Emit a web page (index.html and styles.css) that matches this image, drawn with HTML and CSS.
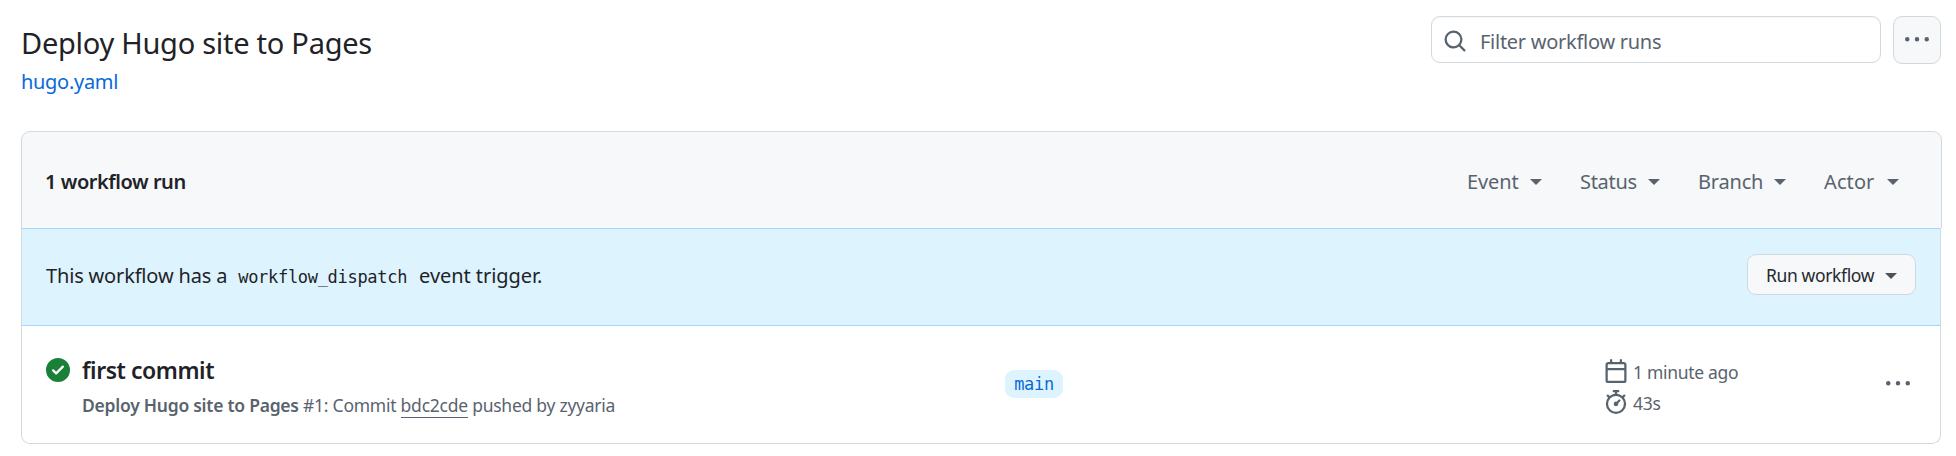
FILE: index.html
```html
<!DOCTYPE html>
<html lang="en">
<head>
<meta charset="utf-8">
<title>Workflow runs</title>
<link rel="stylesheet" href="styles.css">
</head>
<body>
<header class="page-head">
  <div class="heading">
    <h1 class="title">Deploy Hugo site to Pages</h1>
    <a class="file-link">hugo.yaml</a>
  </div>
  <div class="tools">
    <div class="search">
      <svg class="icon" viewBox="0 0 16 16"><path d="M10.68 11.74a6 6 0 0 1-7.922-8.982 6 6 0 0 1 8.982 7.922l3.04 3.04a.749.749 0 0 1-.326 1.275.749.749 0 0 1-.734-.215ZM11.5 7a4.499 4.499 0 1 0-8.997 0A4.499 4.499 0 0 0 11.5 7Z"/></svg>
      <span class="placeholder">Filter workflow runs</span>
    </div>
    <div class="more-button">
      <svg class="icon" viewBox="0 0 16 16"><path d="M8 9a1.5 1.5 0 1 0 0-3 1.5 1.5 0 0 0 0 3ZM1.5 9a1.5 1.5 0 1 0 0-3 1.5 1.5 0 0 0 0 3Zm13 0a1.5 1.5 0 1 0 0-3 1.5 1.5 0 0 0 0 3Z"/></svg>
    </div>
  </div>
</header>
<main class="runs">
  <div class="runs-head">
    <strong class="count">1 workflow run</strong>
    <nav class="filters">
      <span class="filter"><span class="f-event">Event</span><i class="caret"></i></span>
      <span class="filter"><span class="f-status">Status</span><i class="caret"></i></span>
      <span class="filter"><span class="f-branch">Branch</span><i class="caret"></i></span>
      <span class="filter"><span class="f-actor">Actor</span><i class="caret"></i></span>
    </nav>
  </div>
  <div class="dispatch">
    <p class="dispatch-text"><span>This workflow has a</span><code class="code">workflow_dispatch</code><span class="trigger">event trigger.</span></p>
    <div class="run-button"><span class="run-label">Run workflow</span><i class="caret caret-large"></i></div>
  </div>
  <div class="run">
    <svg class="icon check" viewBox="0 0 16 16"><path d="M8 16A8 8 0 1 1 8 0a8 8 0 0 1 0 16Zm3.78-9.72a.751.751 0 0 0-.018-1.042.751.751 0 0 0-1.042-.018L6.75 9.19 5.28 7.72a.751.751 0 0 0-1.042.018.751.751 0 0 0-.018 1.042l2 2a.75.75 0 0 0 1.06 0Z"/></svg>
    <div class="run-info">
      <div class="run-title">first commit</div>
      <div class="run-meta"><b>Deploy Hugo site to Pages</b> #1: Commit <span class="sha">bdc2cde</span> pushed by zyyaria</div>
    </div>
    <div class="branch-cell"><span class="branch">main</span></div>
    <div class="times">
      <div class="time"><svg class="icon" viewBox="0 0 16 16"><path d="M4.75 0a.75.75 0 0 1 .75.75V2h5V.75a.75.75 0 0 1 1.5 0V2h1.25c.966 0 1.75.784 1.75 1.75v10.5A1.75 1.75 0 0 1 13.25 16H2.75A1.75 1.75 0 0 1 1 14.25V3.75C1 2.784 1.784 2 2.75 2H4V.75A.75.75 0 0 1 4.75 0ZM2.5 7.5v6.75c0 .138.112.25.25.25h10.5a.25.25 0 0 0 .25-.25V7.5Zm10.75-4H2.75a.25.25 0 0 0-.25.25V6h11V3.75a.25.25 0 0 0-.25-.25Z"/></svg><span class="ago">1 minute ago</span></div>
      <div class="time"><svg class="icon" viewBox="0 0 16 16"><path d="M5.75.75A.75.75 0 0 1 6.5 0h3a.75.75 0 0 1 0 1.5h-.75v1l-.001.041a6.724 6.724 0 0 1 3.464 1.435l.007-.006.75-.75a.749.749 0 0 1 1.275.326.749.749 0 0 1-.215.734l-.75.75-.006.007a6.75 6.75 0 1 1-10.548 0L2.72 5.03l-.75-.75a.751.751 0 0 1 .018-1.042.751.751 0 0 1 1.042-.018l.75.75.007.006A6.72 6.72 0 0 1 7.25 2.541V1.5H6.5a.75.75 0 0 1-.75-.75ZM8 14.5a5.25 5.25 0 1 0-.001-10.501A5.25 5.25 0 0 0 8 14.5Zm.389-6.7 1.33-1.33a.75.75 0 1 1 1.061 1.06L9.45 8.861A1.503 1.503 0 0 1 8 10.75a1.499 1.499 0 1 1 .389-2.95Z"/></svg><span class="duration">43s</span></div>
    </div>
    <svg class="icon run-more" viewBox="0 0 16 16"><path d="M8 9a1.5 1.5 0 1 0 0-3 1.5 1.5 0 0 0 0 3ZM1.5 9a1.5 1.5 0 1 0 0-3 1.5 1.5 0 0 0 0 3Zm13 0a1.5 1.5 0 1 0 0-3 1.5 1.5 0 0 0 0 3Z"/></svg>
  </div>
</main>
</body>
</html>
```
FILE: styles.css
```css
* { box-sizing: border-box; }
body {
  margin: 0;
  padding: 16px 14px 0 21px;
  background: #fff;
  color: #1f2328;
  font-family: "Noto Sans", "Open Sans", sans-serif;
  font-size: 20px;
  line-height: 30px;
  letter-spacing: -0.3px;
  white-space: nowrap;
}
.icon { width: 24px; height: 24px; fill: #59636e; flex: none; display: block; }
.page-head { display: flex; justify-content: space-between; height: 115px; padding-right: 1px; }
.title { margin: 4px 0 0; font-size: 29px; font-weight: 400; line-height: 45px; letter-spacing: -0.27px; }
.file-link { display: block; margin-top: 2px; color: #0969da; line-height: 30px; }
.tools { display: flex; gap: 12px; }
.search {
  display: flex; align-items: center; gap: 13px;
  width: 450px; height: 47px; padding: 3px 11px 0;
  border: 1px solid #d1d9e0; border-radius: 9px;
  box-shadow: inset 0 1px 0 rgba(31, 35, 40, .04);
  color: #59636e;
}
.placeholder { padding-top: 1px; letter-spacing: -0.27px; }
.more-button {
  width: 48px; height: 48px; padding: 11px;
  border: 1px solid #d1d9e0; border-radius: 9px; background: #f6f8fa;
}
.runs-head {
  display: flex; align-items: center; justify-content: space-between;
  height: 97px; padding: 4px 42px 0 23px;
  border: 1px solid #d1d9e0; border-bottom: 0; border-radius: 9px 9px 0 0;
  background: #f6f8fa;
}
.count { font-weight: 600; letter-spacing: -0.45px; }
.filters { display: flex; gap: 38px; color: #59636e; }
.filter { display: flex; align-items: center; gap: 12px; }
.f-event { width: 51px; letter-spacing: -0.1px; }
.f-status { width: 56px; }
.f-branch { width: 64px; letter-spacing: -0.2px; }
.f-actor { width: 51px; letter-spacing: 0.1px; }
.caret { border: 6px solid transparent; border-top-color: currentColor; border-bottom: 0; }
.dispatch {
  display: flex; align-items: center; justify-content: space-between;
  height: 98px; margin-right: 1px; padding: 0 24px 2px;
  border: 1px solid #d1d9e0; border-top-color: #a5d6ff; border-bottom-color: #a5d6ff;
  background: #ddf4ff;
}
.dispatch-text { display: flex; align-items: baseline; margin: 0; letter-spacing: -0.17px; }
.code { margin: 0 12px 0 11px; font: 17px/24px "DejaVu Sans Mono", monospace; letter-spacing: -0.3px; }
.trigger { letter-spacing: -0.06px; }
.run-button {
  display: flex; align-items: center; justify-content: space-between;
  width: 169px; height: 41px; margin-bottom: 4px; padding: 0 18px;
  border: 1px solid #d1d9e0; border-radius: 9px; background: #f6f8fa;
  color: #25292e; font-size: 17.5px; letter-spacing: -0.37px;
}
.run-label { padding-top: 2px; }
.caret-large { margin-top: 4px; color: #4d5359; }
.run {
  display: flex; height: 118px; margin-right: 1px; padding: 0 30px 0 24px;
  border: 1px solid #d1d9e0; border-top: 0; border-radius: 0 0 9px 9px;
}
.check { margin-top: 32px; fill: #1a7f37; }
.run-info { width: 923px; margin: 28px 0 0 12px; }
.run-title { font-size: 23px; font-weight: 600; line-height: 32px; letter-spacing: -0.45px; }
.run-meta { margin-top: 6px; color: #59636e; font-size: 17.5px; line-height: 27px; letter-spacing: -0.25px; }
.run-meta b { font-weight: 600; }
.sha { display: inline-block; border-bottom: 1px solid #59636e; line-height: 23px; }
.branch-cell { width: 599px; padding-top: 44px; }
.branch {
  display: block; width: 58px; height: 28px; border-radius: 9px;
  background: #ddf4ff; color: #0969da; text-align: center;
  font: 17px/28px "DejaVu Sans Mono", monospace; letter-spacing: -0.3px;
}
.times { display: flex; flex-direction: column; gap: 7px; padding-top: 33px; }
.time { display: flex; align-items: center; gap: 5px; height: 24px; color: #59636e; font-size: 17.5px; }
.ago, .duration { padding-top: 1px; }
.run-more { margin: 46px 0 0 auto; }
```
